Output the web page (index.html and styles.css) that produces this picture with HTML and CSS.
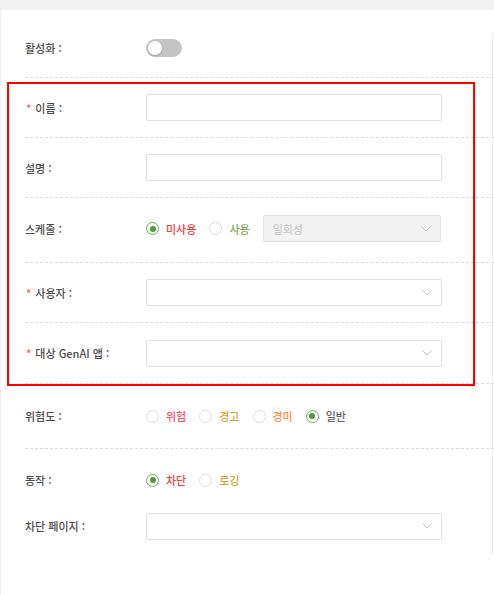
FILE: index.html
```html
<!DOCTYPE html>
<html lang="ko">
<head>
<meta charset="utf-8">
<link rel="stylesheet" href="styles.css">
</head>
<body>
<div class="panel">
  <div class="form">
    <div class="row r1">
      <div class="label">활성화 :</div>
      <div class="control"><span class="toggle"><span class="knob"></span></span></div>
    </div>
    <div class="row r2">
      <div class="label req"><span class="star">*</span>이름 :</div>
      <div class="control"><span class="input"></span></div>
    </div>
    <div class="row r3">
      <div class="label">설명 :</div>
      <div class="control"><span class="input"></span></div>
    </div>
    <div class="row r4">
      <div class="label">스케줄 :</div>
      <div class="control radios">
        <span class="radio checked"></span><span class="opt c-red">미사용</span>
        <span class="radio"></span><span class="opt c-green">사용</span>
        <span class="select disabled short"><span class="ph">일회성</span><svg class="chev" width="10" height="6" viewBox="0 0 10 6"><path d="M0.5 0.5 L5 5 L9.5 0.5" fill="none" stroke="#c6c6c6" stroke-width="1"/></svg></span>
      </div>
    </div>
    <div class="row r5">
      <div class="label req"><span class="star">*</span>사용자 :</div>
      <div class="control"><span class="select"><span class="ph"></span><svg class="chev" width="10" height="6" viewBox="0 0 10 6"><path d="M0.5 0.5 L5 5 L9.5 0.5" fill="none" stroke="#c6c6c6" stroke-width="1"/></svg></span></div>
    </div>
    <div class="row r6">
      <div class="label req"><span class="star">*</span>대상 GenAI 앱 :</div>
      <div class="control"><span class="select"><span class="ph"></span><svg class="chev" width="10" height="6" viewBox="0 0 10 6"><path d="M0.5 0.5 L5 5 L9.5 0.5" fill="none" stroke="#c6c6c6" stroke-width="1"/></svg></span></div>
    </div>
    <div class="row r7">
      <div class="label">위험도 :</div>
      <div class="control radios">
        <span class="radio"></span><span class="opt c-pink">위험</span>
        <span class="radio"></span><span class="opt c-gold">경고</span>
        <span class="radio"></span><span class="opt c-orange">경미</span>
        <span class="radio checked"></span><span class="opt c-gray last">일반</span>
      </div>
    </div>
    <div class="row r8 noline">
      <div class="label">동작 :</div>
      <div class="control radios">
        <span class="radio checked"></span><span class="opt c-red">차단</span>
        <span class="radio"></span><span class="opt c-gold last">로깅</span>
      </div>
    </div>
    <div class="row r9 noline">
      <div class="label">차단 페이지 :</div>
      <div class="control"><span class="select"><span class="ph"></span><svg class="chev" width="10" height="6" viewBox="0 0 10 6"><path d="M0.5 0.5 L5 5 L9.5 0.5" fill="none" stroke="#c6c6c6" stroke-width="1"/></svg></span></div>
    </div>
  </div>
  <div class="highlight"></div>
</div>
</body>
</html>
```
FILE: styles.css
```css
* { box-sizing: border-box; }
html, body { margin: 0; padding: 0; }
body {
  background: #f2f2f2;
  font-family: "Noto Sans CJK KR", "Noto Sans", sans-serif;
  font-size: 11px;
  color: #555;
  width: 494px;
  height: 595px;
  overflow: hidden;
}
.panel {
  position: relative;
  margin: 10px 0 0 1px;
  width: 493px;
  height: 585px;
  background: #fff;
}
.panel::after {
  content: "";
  position: absolute;
  right: 1px;
  top: 23px;
  bottom: 40px;
  width: 1px;
  background: #ececec;
}
.form {
  padding: 8px 0 0 24px;
}
.row {
  display: flex;
  align-items: center;
  border-bottom: 1px dashed #dcdcdc;
}
.row.noline { border-bottom: none; }
.r1 { height: 60px; }
.r2 { height: 60px; }
.r3 { height: 60px; }
.r4 { height: 65px; padding-bottom: 3px; }
.r5 { height: 60px; }
.r6 { height: 61px; }
.r7 { height: 65px; }
.r8 { height: 62px; }
.r9 { height: 30px; }
.label {
  width: 121px;
  flex: none;
  color: #4d4d4d;
  font-weight: 500;
  line-height: 14px;
  white-space: nowrap;
}
.label.req .star {
  color: #ff5a5a;
  margin: 0 4px 0 1px;
}
.control {
  display: flex;
  align-items: center;
}
.toggle {
  display: block;
  position: relative;
  width: 36px;
  height: 18px;
  border-radius: 9px;
  background: #c4c4c4;
}
.knob {
  position: absolute;
  left: 2px;
  top: 2px;
  width: 14px;
  height: 14px;
  border-radius: 50%;
  background: #fff;
  box-shadow: 0 1px 2px rgba(0,0,0,0.2);
}
.input, .select {
  display: flex;
  align-items: center;
  width: 296px;
  height: 27px;
  border: 1px solid #e3e3e3;
  border-radius: 2px;
  background: #fff;
  box-shadow: 0 0 1px rgba(0,0,0,0.06);
}
.select {
  justify-content: space-between;
  padding: 0 9px 0 9px;
}
.select.short { width: 178px; }
.select.disabled { background: #f3f3f3; }
.ph { color: #c2c2c2; }
.chev { display: block; }
.radio {
  display: block;
  width: 13px;
  height: 13px;
  border: 1px solid #dedede;
  border-radius: 50%;
  background: #fff;
  position: relative;
  flex: none;
}
.radio.checked { border-color: #6fad55; }
.radio.checked::after {
  content: "";
  position: absolute;
  left: 2.5px;
  top: 2.5px;
  width: 6px;
  height: 6px;
  border-radius: 50%;
  background: #4e9a35;
}
.opt { margin: 0 13px 0 7px; line-height: 14px; font-weight: 500; }
.opt.last { margin-right: 0; }
.c-red { color: #f33d3d; }
.c-green { color: #84a852; }
.c-pink { color: #ff4d68; }
.c-gold { color: #cfa73a; }
.c-orange { color: #ff8f4a; }
.c-gray { color: #666; }
.highlight {
  position: absolute;
  left: 6px;
  top: 72px;
  width: 468px;
  height: 304px;
  border: 2px solid #ff0000;
  pointer-events: none;
}
```
